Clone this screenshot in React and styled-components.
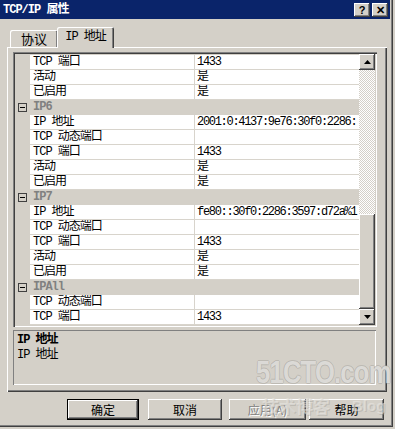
import React from 'react';
import styled, { createGlobalStyle } from 'styled-components';

const GlobalStyle = createGlobalStyle`
  html, body {
    margin: 0;
    padding: 0;
    background: #d4d0c8;
  }
  * {
    box-sizing: border-box;
  }
`

const simsun = `"Liberation Mono", "Noto Sans CJK SC", monospace`;
const uiFont = `"Noto Sans CJK SC", "Liberation Sans", sans-serif`;

const raised = `
  background: #d4d0c8;
  box-shadow: inset -1px -1px #404040, inset 1px 1px #ffffff,
    inset -2px -2px #808080, inset 2px 2px #d4d0c8;
`

const Window = styled.div`
  position: relative;
  width: 393px;
  height: 427px;
  background: #d4d0c8;
  box-shadow: inset -1px -1px #404040, inset -2px -2px #808080;
  display: flex;
  flex-direction: column;
  overflow: hidden;
`

const TitleBar = styled.div`
  height: 19px;
  margin-right: 3px;
  background: #0a246a;
  display: flex;
  align-items: center;
  padding: 0 2px 0 3px;
`

const Title = styled.div`
  flex: 1;
  color: #fff;
  font-family: ${simsun};
  font-weight: bold;
  font-size: 12px;
  letter-spacing: -1px;
  line-height: 14px;
`

const CaptionButton = styled.div`
  ${raised}
  width: 16px;
  height: 14px;
  margin-left: 2px;
  display: flex;
  align-items: center;
  justify-content: center;
  font-family: "Liberation Sans", sans-serif;
  font-weight: bold;
  font-size: 11px;
  line-height: 1;
  color: #000;
  padding-top: 1px;
`

const TabStrip = styled.div`
  height: 28px;
  padding-left: 10px;
  display: flex;
  align-items: flex-end;
`

const Tab = styled.div`
  position: relative;
  z-index: ${(p) => (p.active ? 2 : 1)};
  height: ${(p) => (p.active ? '21px' : '17px')};
  width: ${(p) => p.w}px;
  margin-left: ${(p) => (p.active ? '-1px' : '0')};
  margin-bottom: ${(p) => (p.active ? '-1px' : '0')};
  background: #d4d0c8;
  border-radius: 2px 2px 0 0;
  box-shadow: inset 1px 1px #ffffff, inset -1px 0 #404040, inset -2px 0 #808080;
  display: flex;
  align-items: center;
  justify-content: center;
  padding-bottom: ${(p) => (p.active ? '2px' : '0')};
  font-family: ${(p) => (p.active ? simsun : uiFont)};
  font-size: ${(p) => (p.active ? '12px' : '13px')};
  letter-spacing: ${(p) => (p.active ? '-1px' : '0')};
  color: #000;
  line-height: 14px;
`

const TabPanel = styled.div`
  margin-left: 7px;
  width: 380px;
  height: 345px;
  background: #d4d0c8;
  box-shadow: inset 1px 1px #ffffff, inset -1px -1px #404040, inset -2px -2px #808080;
  padding: 5px 0 0 6px;
  display: flex;
  flex-direction: column;
`

const Grid = styled.div`
  width: 364px;
  height: 275px;
  padding: 2px;
  background: #d4d0c8;
  box-shadow: inset 1px 1px #808080, inset 2px 2px #404040,
    inset -1px -1px #ffffff, inset -2px -2px #d4d0c8;
  display: flex;
`

const Rows = styled.div`
  flex: 1;
  padding-top: 1px;
  background: #d4d0c8;
  overflow: hidden;
`

const Row = styled.div`
  display: grid;
  grid-template-columns: 15px 165px 164px;
  height: 15px;
  font-family: ${simsun};
  font-size: 12px;
  letter-spacing: -1px;
  line-height: 14px;
  color: #000;
`

const Gutter = styled.div`
  background: #d4d0c8;
  display: flex;
  align-items: center;
  justify-content: center;
`

const Cell = styled.div`
  background: #fff;
  border-bottom: 1px solid #d8d4cc;
  border-right: ${(p) => (p.divider ? '1px solid #d8d4cc' : 'none')};
  padding-left: ${(p) => (p.divider ? '3px' : '2px')};
  letter-spacing: ${(p) => (p.divider ? '-1px' : '-1.3px')};
  white-space: nowrap;
  overflow: hidden;
`

const GroupCell = styled.div`
  grid-column: 2 / 4;
  background: #d4d0c8;
  padding-left: 3px;
  font-weight: bold;
  color: #808080;
`

const Toggle = styled.span`
  position: relative;
  width: 9px;
  height: 9px;
  border: 1px solid #404040;
  background: #d4d0c8;
  &::after {
    content: '';
    position: absolute;
    left: 1px;
    top: 3px;
    width: 5px;
    height: 1px;
    background: #000;
  }
`

const ScrollBar = styled.div`
  width: 16px;
  display: flex;
  flex-direction: column;
`

const ArrowButton = styled.div`
  ${raised}
  height: 16px;
  display: flex;
  align-items: center;
  justify-content: center;
`

const Track = styled.div`
  flex: 1;
  background-color: #fff;
  background-image: repeating-conic-gradient(#d4d0c8 0 25%, #ffffff 0 50%);
  background-size: 2px 2px;
`

const Thumb = styled.div`
  ${raised}
  height: 95px;
`

const Description = styled.div`
  margin-top: 3px;
  width: 363px;
  height: 55px;
  padding: 3px 4px;
  box-shadow: inset 1px 1px #808080, inset -1px -1px #ffffff;
  font-family: ${simsun};
  font-size: 12px;
  letter-spacing: -1px;
  line-height: 15px;
  color: #000;
`

const DescTitle = styled.div`
  font-weight: bold;
`

const ButtonRow = styled.div`
  display: flex;
  margin-top: 7px;
  padding-left: 67px;
`

const Button = styled.div`
  ${raised}
  width: ${(p) => p.w}px;
  height: 21px;
  margin-left: ${(p) => p.gap || 0}px;
  display: flex;
  align-items: center;
  justify-content: center;
  font-family: ${uiFont};
  font-size: 12px;
  line-height: 14px;
  color: ${(p) => (p.disabled ? '#808080' : '#000')};
  text-shadow: ${(p) => (p.disabled ? '1px 1px #ffffff' : 'none')};
  ${(p) =>
    p.primary &&
    `box-shadow: inset 0 0 0 1px #000, inset -2px -2px #404040, inset 2px 2px #ffffff,
      inset -3px -3px #808080;`}
`

// faint site watermark stamped over the bottom right of the screenshot
const Watermark = styled.div`
  position: absolute;
  left: 256px;
  top: 356px;
  pointer-events: none;
  white-space: nowrap;
  font-family: "Liberation Sans", sans-serif;
  font-weight: bold;
  font-size: 32px;
  line-height: 32px;
  letter-spacing: -1px;
  color: rgba(244, 243, 240, 0.7);
  text-shadow: 1px 0 rgba(160, 158, 154, 0.45), -1px 0 rgba(160, 158, 154, 0.45),
    0 1px rgba(160, 158, 154, 0.45), 0 -1px rgba(160, 158, 154, 0.45);
  transform: scaleX(0.8);
  transform-origin: left top;
`

const WatermarkSub = styled.div`
  position: absolute;
  left: ${(p) => p.x}px;
  top: 397px;
  pointer-events: none;
  white-space: nowrap;
  font-family: ${(p) => (p.latin ? '"Liberation Sans", sans-serif' : uiFont)};
  font-size: ${(p) => (p.latin ? 15 : 17)}px;
  font-weight: bold;
  line-height: 17px;
  color: rgba(232, 230, 226, 0.6);
  text-shadow: 1px 1px rgba(150, 148, 144, 0.35);
`

const Arrow = ({ up }) => (
  <svg width="7" height="4" viewBox="0 0 7 4">
    <path d={up ? 'M3.5 0 L7 4 L0 4 Z' : 'M0 0 L7 0 L3.5 4 Z'} fill="#000" />
  </svg>
)

const rows = [
  { name: 'TCP 端口', value: '1433' },
  { name: '活动', value: '是' },
  { name: '已启用', value: '是' },
  { group: 'IP6' },
  { name: 'IP 地址', value: '2001:0:4137:9e76:30f0:2286:' },
  { name: 'TCP 动态端口', value: '' },
  { name: 'TCP 端口', value: '1433' },
  { name: '活动', value: '是' },
  { name: '已启用', value: '是' },
  { group: 'IP7' },
  { name: 'IP 地址', value: 'fe80::30f0:2286:3597:d72a%1' },
  { name: 'TCP 动态端口', value: '' },
  { name: 'TCP 端口', value: '1433' },
  { name: '活动', value: '是' },
  { name: '已启用', value: '是' },
  { group: 'IPAll' },
  { name: 'TCP 动态端口', value: '' },
  { name: 'TCP 端口', value: '1433' },
]

const App = () => {
  return (
    <>
      <GlobalStyle />
      <Window>
        <TitleBar>
          <Title>TCP/IP 属性</Title>
          <CaptionButton>?</CaptionButton>
          <CaptionButton>✕</CaptionButton>
        </TitleBar>

        <TabStrip>
          <Tab w={48}>协议</Tab>
          <Tab w={57} active>IP 地址</Tab>
        </TabStrip>

        <TabPanel>
          <Grid>
            <Rows>
              {rows.map((r, i) =>
                r.group ? (
                  <Row key={i}>
                    <Gutter>
                      <Toggle />
                    </Gutter>
                    <GroupCell>{r.group}</GroupCell>
                  </Row>
                ) : (
                  <Row key={i}>
                    <Gutter />
                    <Cell divider>{r.name}</Cell>
                    <Cell>{r.value}</Cell>
                  </Row>
                )
              )}
            </Rows>
            <ScrollBar>
              <ArrowButton>
                <Arrow up />
              </ArrowButton>
              <Track />
              <Thumb />
              <ArrowButton>
                <Arrow />
              </ArrowButton>
            </ScrollBar>
          </Grid>

          <Description>
            <DescTitle>IP 地址</DescTitle>
            <div>IP 地址</div>
          </Description>
        </TabPanel>

        <ButtonRow>
          <Button w={72} primary>确定</Button>
          <Button w={74} gap={9}>取消</Button>
          <Button w={77} gap={7} disabled>应用(A)</Button>
          <Button w={75} gap={3}>帮助</Button>
        </ButtonRow>

        <Watermark>51CTO.com</Watermark>
        <WatermarkSub x={262}>技术博客</WatermarkSub>
        <WatermarkSub x={352} latin>Blog</WatermarkSub>
      </Window>
    </>
  )
}

export default App;
